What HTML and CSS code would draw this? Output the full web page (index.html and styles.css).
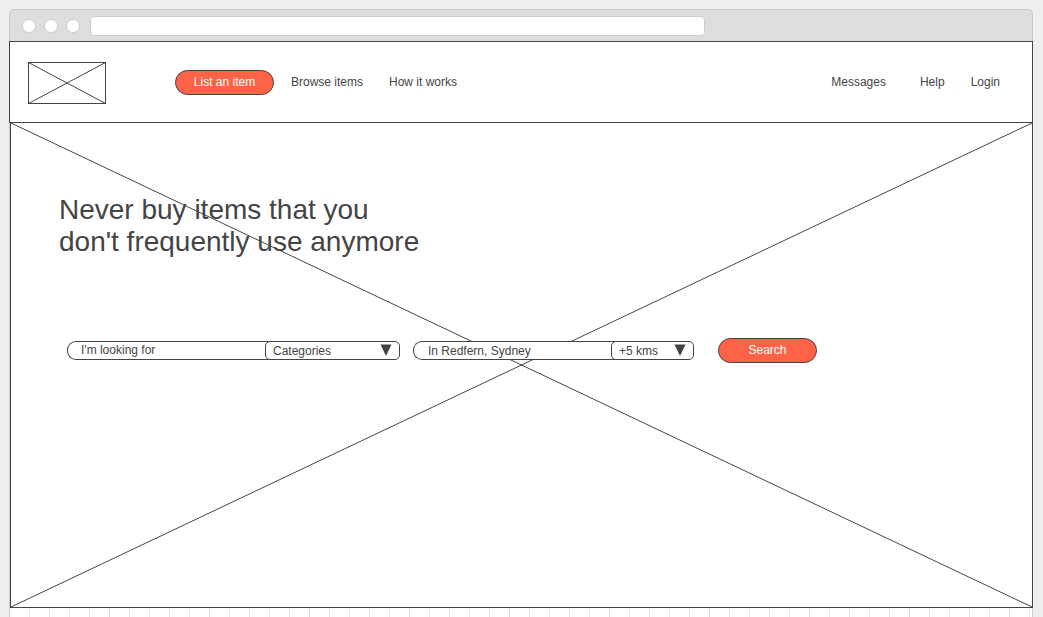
FILE: index.html
```html
<!DOCTYPE html>
<html lang="en">
<head>
<meta charset="utf-8">
<meta name="viewport" content="width=device-width, initial-scale=1">
<title>Marketplace wireframe</title>
<link rel="stylesheet" href="styles.css">
</head>
<body>
<div class="window">
  <div class="chrome">
    <span class="dot"></span>
    <span class="dot"></span>
    <span class="dot"></span>
    <input class="address" type="text" aria-label="Address">
  </div>
  <header class="header">
    <svg class="logo" viewBox="0 0 78 42" role="img" aria-label="Logo">
      <rect x="0.5" y="0.5" width="77" height="41"/>
      <path d="M.5 .5L77.5 41.5M77.5 .5L.5 41.5"/>
    </svg>
    <nav class="nav">
      <a class="pill" href="#">List an item</a>
      <a href="#">Browse items</a>
      <a href="#">How it works</a>
    </nav>
    <nav class="account">
      <a class="messages" href="#">Messages</a>
      <a href="#">Help</a>
      <a href="#">Login</a>
    </nav>
  </header>
  <main class="hero">
    <h1 class="title">Never buy items that you<br>don't frequently use anymore</h1>
    <svg class="cross" viewBox="0 0 1022 485" preserveAspectRatio="none" aria-hidden="true">
      <path d="M0 0L1022 485M1022 0L0 485"/>
    </svg>
    <form class="search">
      <div class="group">
        <input class="field what" type="text" value="I'm looking for" aria-label="Item">
        <div class="picker category">
          <select aria-label="Category"><option>Categories</option></select>
          <svg class="arrow" viewBox="0 0 12 12" aria-hidden="true"><path d="M.5 .5H11.5L6 12Z"/></svg>
        </div>
      </div>
      <div class="group">
        <input class="field where" type="text" value="In Redfern, Sydney" aria-label="Location">
        <div class="picker distance">
          <select aria-label="Distance"><option>+5 kms</option></select>
          <svg class="arrow" viewBox="0 0 12 12" aria-hidden="true"><path d="M.5 .5H11.5L6 12Z"/></svg>
        </div>
      </div>
      <button class="pill submit" type="button">Search</button>
    </form>
  </main>
  <div class="grid"></div>
</div>
</body>
</html>
```
FILE: styles.css
```css
* {
  box-sizing: border-box;
}

body {
  margin: 0;
  background: #eee;
  color: #444;
  font: 12px/16px "Liberation Sans", Arial, sans-serif;
}

a {
  color: inherit;
  text-decoration: none;
}

input,
select,
button {
  margin: 0;
  color: inherit;
  font: inherit;
}

.window {
  display: flex;
  flex-direction: column;
  min-height: 100vh;
  padding: 9px 10px 0 9px;
}

.chrome {
  display: flex;
  align-items: center;
  gap: 8px;
  height: 32px;
  padding: 1px 12px 0;
  background: #ddd;
  border: 1px solid #c8c8c8;
  border-bottom: 0;
  border-radius: 5px 5px 0 0;
}

.dot {
  flex: none;
  width: 14px;
  height: 14px;
  background: #fff;
  border: 1px solid #ccc;
  border-radius: 50%;
}

.address {
  flex: 0 1 615px;
  min-width: 0;
  height: 20px;
  margin-left: 2px;
  background: #fff;
  border: 1px solid #ccc;
  border-radius: 4px;
}

.header {
  display: flex;
  align-items: center;
  height: 82px;
  padding: 0 32px 0 18px;
  background: #fff;
  border: 1px solid #444;
}

.logo {
  flex: none;
  width: 78px;
  height: 42px;
  margin-top: 2px;
  fill: none;
  stroke: #444;
}

.nav {
  display: flex;
  align-items: center;
  margin-left: 69px;
  gap: 26px;
}

.nav .pill {
  margin-right: -9px;
}

.pill {
  display: flex;
  align-items: center;
  justify-content: center;
  width: 99px;
  height: 25px;
  padding: 0 0 1px;
  background: #ff6347;
  border: 1px solid #444;
  border-radius: 13px;
  color: #fff;
}

.account {
  display: flex;
  gap: 26px;
  margin-left: auto;
}

.messages {
  margin-right: 8px;
}

.hero {
  position: relative;
  height: 485px;
  margin-left: 1px;
  padding: 71px 48px 0;
  background: #fff;
  border: 1px solid #444;
  border-top: 0;
  box-shadow: -1px 0 #ccc;
}

.cross {
  position: absolute;
  inset: 0;
  width: 100%;
  height: 100%;
  fill: none;
  stroke: #444;
  pointer-events: none;
}

.title {
  margin: 0;
  font-size: 28px;
  font-weight: 400;
  line-height: 32px;
}

.search {
  position: relative;
  display: flex;
  align-items: center;
  margin: 80px 0 0 8px;
}

.group {
  display: flex;
  height: 19px;
  margin-right: 13px;
}

.field {
  width: 204px;
  padding: 0 13px;
  background: #fff;
  border: 1px solid #444;
  border-right: 0;
  border-radius: 9px 0 0 9px;
}

.what {
  padding-bottom: 2px;
}

.where {
  padding-left: 14px;
}

.picker {
  position: relative;
  margin-left: -6px;
}

.category {
  width: 135px;
}

.distance {
  width: 83px;
}

.picker select {
  width: 100%;
  height: 100%;
  padding: 0 7px;
  appearance: none;
  background: #fff;
  border: 1px solid #444;
  border-radius: 5px;
}

.arrow {
  position: absolute;
  top: 3px;
  right: 8px;
  width: 12px;
  height: 12px;
  fill: #444;
  pointer-events: none;
}

.submit {
  margin-left: 11px;
}

.grid {
  flex: 1;
  min-height: 9px;
  background-color: #fff;
  background-image:
    linear-gradient(90deg, transparent 99px, #ddd 99px),
    linear-gradient(90deg, transparent 19px, #eaeaea 19px);
  background-size: 100px 100%, 20px 100%;
  border: solid #ccc;
  border-width: 0 1px;
}
```
